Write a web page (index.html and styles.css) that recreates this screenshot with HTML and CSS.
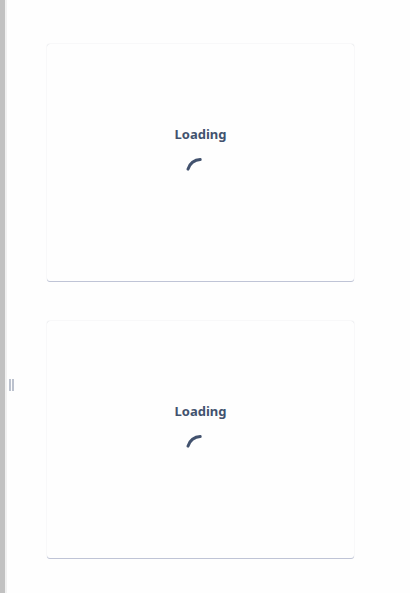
FILE: index.html
```html
<!DOCTYPE html>
<html lang="en">
<head>
  <meta charset="UTF-8" />
  <meta name="viewport" content="width=device-width, initial-scale=1.0" />
  <title>Loading</title>
  <link rel="stylesheet" href="styles.css">
</head>
<body>
  <div class="scroll-edge"></div>
  <div class="resize-handle"></div>

  <main class="content">
    <section class="card">
      <h2>Loading</h2>
      <svg class="spinner" viewBox="0 0 30 30">
        <path d="M14.2 2.5 A13 13 0 0 0 2 12.1" />
      </svg>
    </section>

    <section class="card">
      <h2>Loading</h2>
      <svg class="spinner" viewBox="0 0 30 30">
        <path d="M14.2 2.5 A13 13 0 0 0 2 12.1" />
      </svg>
    </section>
  </main>
</body>
</html>
```

FILE: styles.css
```css
* {
  box-sizing: border-box;
}

body {
  margin: 0;
  font-family: 'Noto Sans', sans-serif;
  background: #fefefe;
  color: #42526e;
  display: flex;
  min-height: 100vh;
}

.scroll-edge {
  flex: none;
  width: 7px;
  background: #c1c1c1;
  border-right: 2px solid #f1f1f1;
}

.resize-handle {
  flex: none;
  align-self: flex-end;
  width: 5px;
  height: 12px;
  margin: 0 0 202px 2px;
  border: solid #bcc2ce;
  border-width: 0 2px;
}

.content {
  flex: 1;
  display: flex;
  flex-direction: column;
  gap: 40px;
  padding: 44px 56px 34px 33px;
}

.card {
  display: flex;
  flex-direction: column;
  align-items: center;
  gap: 13px;
  min-height: 237px;
  padding: 80px 16px;
  border-radius: 3px;
  background: #fefefe;
  box-shadow: 0 1px 0 #bfc4d6, 0 0 1px rgba(9, 30, 66, 0.25);
}

.card h2 {
  margin: 0;
  font-size: 13px;
  line-height: 20px;
  font-weight: 700;
}

.spinner {
  width: 30px;
  height: 30px;
}

.spinner path {
  fill: none;
  stroke: #42526e;
  stroke-width: 3;
  stroke-linecap: round;
}
```
